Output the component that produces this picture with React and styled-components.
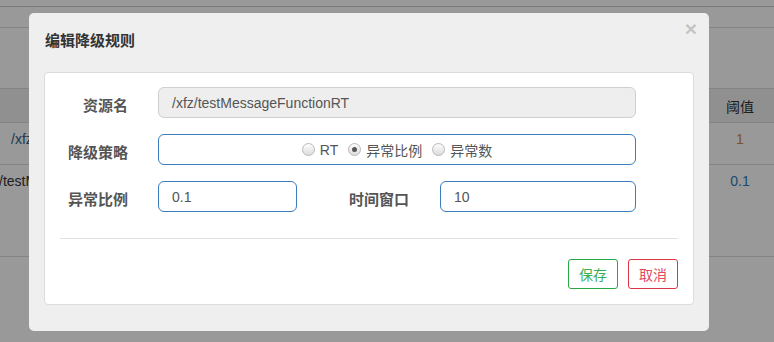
import React, { useState } from 'react';
import styled, { createGlobalStyle } from 'styled-components';

const GlobalStyle = createGlobalStyle`
    html, body {
        margin: 0;
        padding: 0;
        background: #fff;
        font-family: "Liberation Sans", "Noto Sans CJK SC", sans-serif;
        font-size: 14px;
        color: #333;
    }
`;

const Page = styled.div`
    width: 774px;
    height: 342px;
    overflow: hidden;
`;

const TopStrip = styled.div`
    height: 6px;
    border-bottom: 1px solid #ccc;
`;

const SubStrip = styled.div`
    height: 20px;
    border-bottom: 1px solid #ddd;
    margin-bottom: 60px;
`;

const Table = styled.div`
    display: grid;
    grid-template-columns: 29px 1fr 68px;
`;

const HeadCell = styled.div`
    height: 33px;
    background: #f0f0f0;
    border-top: 1px solid #ddd;
    border-bottom: 1px solid #ddd;
    display: flex;
    align-items: center;
    justify-content: center;
    font-size: 14px;
    color: #333;
`;

const Cell = styled.div`
    height: ${p => p.$h}px;
    border-bottom: 1px solid #ddd;
    padding-top: 6px;
    box-sizing: border-box;
    text-align: ${p => (p.$indent !== undefined ? 'left' : 'center')};
    text-indent: ${p => p.$indent || 0}px;
    overflow: hidden;
    white-space: nowrap;
    color: ${p => p.$color || '#333'};
    line-height: 20px;
    font-size: 14px;
`;

const Backdrop = styled.div`
    position: fixed;
    inset: 0;
    background: rgba(0, 0, 0, 0.4);
`;

const Modal = styled.div`
    position: fixed;
    left: 29px;
    top: 13px;
    width: 680px;
    box-sizing: border-box;
    background: #efefef;
    border-radius: 5px;
    padding: 0 15px 26px;
`;

const ModalHeader = styled.div`
    height: 59px;
    display: flex;
    align-items: center;
    justify-content: space-between;
    padding: 0 1px;
`;

const Title = styled.h4`
    margin: 0;
    font-size: 15px;
    font-weight: bold;
    color: #333;
    transform: translateY(-3px);
`;

const Close = styled.span`
    font-size: 21px;
    font-weight: bold;
    color: #c4c4c4;
    line-height: 1;
    margin-right: -4px;
    transform: translateY(-14px);
    cursor: pointer;
`;

const Card = styled.div`
    background: #fff;
    border: 1px solid #dcdcdc;
    border-radius: 4px;
    padding: 14px 15px 15px;
`;

const Form = styled.div`
    display: flex;
    flex-direction: column;
    gap: 16px;
`;

const Row = styled.div`
    display: flex;
    align-items: center;
    height: 31px;
`;

const Label = styled.label`
    width: ${p => p.$w}px;
    margin-right: ${p => p.$gap}px;
    padding-top: 3px;
    text-align: right;
    font-size: 15px;
    font-weight: bold;
    color: #555;
    flex-shrink: 0;
`;

const Field = styled.div`
    width: ${p => p.$w}px;
    height: 31px;
    box-sizing: border-box;
    border: 1px solid ${p => (p.$disabled ? '#cfcfcf' : '#3a7cbd')};
    background: ${p => (p.$disabled ? '#eeeeee' : '#fff')};
    border-radius: 6px;
    padding: 0 13px;
    display: flex;
    align-items: center;
    justify-content: ${p => (p.$center ? 'center' : 'flex-start')};
    font-size: 14px;
    color: #555;
    flex-shrink: 0;
`;

const RadioItem = styled.span`
    display: inline-flex;
    align-items: center;
    gap: 5px;
    margin: 0 5px;
    color: #555;
    font-size: 14px;
    cursor: pointer;
`;

const RadioDot = styled.span`
    width: 11px;
    height: 11px;
    border-radius: 50%;
    border: 1px solid #b9b9b9;
    background: linear-gradient(#fdfdfd, #dcdcdc);
    display: inline-flex;
    align-items: center;
    justify-content: center;

    &::after {
        content: '';
        width: 5px;
        height: 5px;
        border-radius: 50%;
        background: ${p => (p.$checked ? '#555' : 'transparent')};
    }
`;

const Divider = styled.div`
    height: 1px;
    background: #e3e3e3;
    margin: 26px 0 20px;
`;

const Footer = styled.div`
    display: flex;
    justify-content: flex-end;
    gap: 10px;
`;

const Button = styled.button`
    width: 50px;
    height: 30px;
    box-sizing: border-box;
    border-radius: 3px;
    background: #fff;
    font-family: inherit;
    font-size: 14px;
    padding: 0;
    cursor: pointer;
    border: 1px solid ${p => (p.$variant === 'danger' ? '#dc3545' : '#28a745')};
    color: ${p => (p.$variant === 'danger' ? '#e04a5c' : '#3aad55')};
`;

const strategies = [
    { key: 'rt', label: 'RT' },
    { key: 'ratio', label: '异常比例' },
    { key: 'count', label: '异常数' },
];

export default function App() {
    const [strategy, setStrategy] = useState('ratio');

    return (
        <Page>
            <GlobalStyle />
            {/* 背景页面 */}
            <TopStrip />
            <SubStrip />
            <Table>
                <HeadCell />
                <HeadCell />
                <HeadCell>阈值</HeadCell>
                <Cell $h={42} $indent={11} $color="#35608a">/xfz</Cell>
                <Cell $h={42} />
                <Cell $h={42} $color="#d08a3a">1</Cell>
                <Cell $h={92} $indent={-1}>/testM</Cell>
                <Cell $h={92} />
                <Cell $h={92} $color="#337ab7">0.1</Cell>
            </Table>

            <Backdrop />
            <Modal>
                <ModalHeader>
                    <Title>编辑降级规则</Title>
                    <Close>×</Close>
                </ModalHeader>
                <Card>
                    <Form>
                        <Row>
                            <Label $w={68} $gap={30}>资源名</Label>
                            <Field $w={478} $disabled>/xfz/testMessageFunctionRT</Field>
                        </Row>
                        <Row>
                            <Label $w={68} $gap={30}>降级策略</Label>
                            <Field $w={478} $center>
                                {strategies.map(s => (
                                    <RadioItem key={s.key} onClick={() => setStrategy(s.key)}>
                                        <RadioDot $checked={strategy === s.key} />
                                        {s.label}
                                    </RadioItem>
                                ))}
                            </Field>
                        </Row>
                        <Row>
                            <Label $w={68} $gap={30}>异常比例</Label>
                            <Field $w={139}>0.1</Field>
                            <Label $w={112} $gap={31}>时间窗口</Label>
                            <Field $w={196}>10</Field>
                        </Row>
                    </Form>
                    <Divider />
                    <Footer>
                        <Button>保存</Button>
                        <Button $variant="danger">取消</Button>
                    </Footer>
                </Card>
            </Modal>
        </Page>
    );
}
